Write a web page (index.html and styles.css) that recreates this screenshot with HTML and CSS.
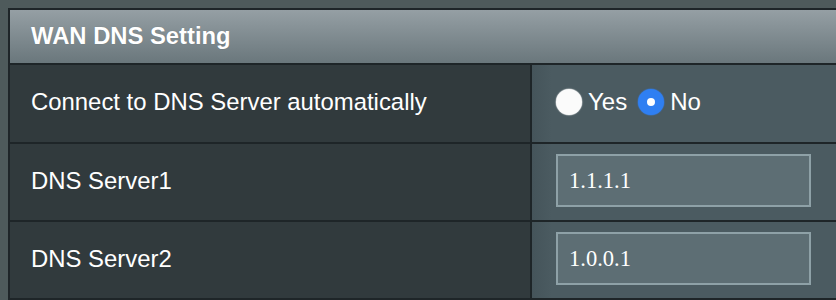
FILE: index.html
```html
<!DOCTYPE html>
<html>
<head>
<meta charset="utf-8">
<link rel="stylesheet" href="styles.css">
</head>
<body>
<div class="panel">
  <div class="head">WAN DNS Setting</div>
  <div class="row first">
    <div class="label">Connect to DNS Server automatically</div>
    <div class="value">
      <label class="radio"><span class="dot"></span>Yes</label>
      <label class="radio"><span class="dot on"></span>No</label>
    </div>
  </div>
  <div class="row">
    <div class="label">DNS Server1</div>
    <div class="value"><div class="field">1.1.1.1</div></div>
  </div>
  <div class="row last">
    <div class="label">DNS Server2</div>
    <div class="value"><div class="field">1.0.0.1</div></div>
  </div>
</div>
</body>
</html>
```
FILE: styles.css
```css
html, body {
  margin: 0;
  padding: 0;
  overflow: hidden;
}
body {
  background: #4e5a5b;
  padding: 8px 0 0 8px;
  width: 836px;
  height: 300px;
  box-sizing: border-box;
  font-family: "Liberation Sans", Arial, sans-serif;
  color: #fff;
}
.panel {
  width: 826px;
  border-top: 2px solid #1e2528;
  border-left: 2px solid #1e2528;
}
.head {
  height: 55px;
  box-sizing: border-box;
  padding-left: 21px;
  padding-bottom: 2px;
  display: flex;
  align-items: center;
  font-weight: bold;
  font-size: 23.8px;
  background: linear-gradient(#959fa4, #6a777c);
  border-bottom: 2px solid #1e2528;
  text-shadow: 0 0 1px rgba(0,0,0,0.2);
}
.row {
  display: flex;
  height: 78px;
  box-sizing: border-box;
  border-bottom: 2px solid #1e2528;
}
.row.first {
  height: 79px;
}
.label {
  width: 522px;
  flex: none;
  box-sizing: border-box;
  padding-left: 21px;
  padding-bottom: 3px;
  display: flex;
  align-items: center;
  font-size: 23.9px;
  background: #313a3d;
  border-right: 2px solid #1e2528;
}
.value {
  flex: 1;
  display: flex;
  align-items: center;
  padding-left: 24px;
  padding-bottom: 3px;
  background: linear-gradient(90deg, #45545a 0px, #4b5b61 20px, #4b5b61);
}
.radio {
  display: flex;
  align-items: center;
  font-size: 24px;
  margin-right: 11px;
}
.dot {
  width: 26px;
  height: 26px;
  border-radius: 50%;
  background: #fbfbfb;
  box-shadow: 0 0 1px 0.5px rgba(255,255,255,0.6);
  margin-right: 6px;
  box-sizing: border-box;
}
.dot.on {
  background: #fff;
  border: 9px solid #2f7ff2;
  box-shadow: 0 0 1px 0.5px rgba(47,127,242,0.6);
}
.field {
  width: 255px;
  height: 53px;
  box-sizing: border-box;
  border: 2px solid #8ea1a7;
  background: #5d6e74;
  padding-left: 11px;
  display: flex;
  align-items: center;
  font-family: "Liberation Serif", "Times New Roman", serif;
  font-size: 22.5px;
  color: #fff;
}
```
